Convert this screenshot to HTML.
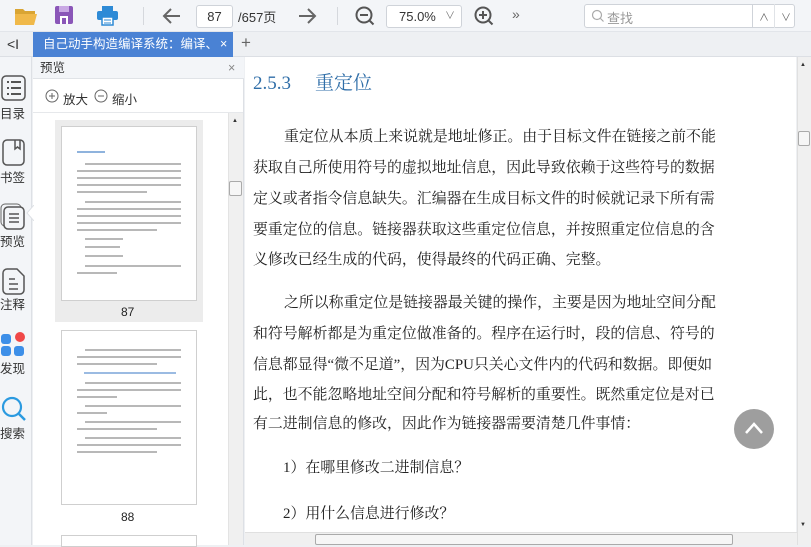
<!DOCTYPE html>
<html><head><meta charset="utf-8"><style>
*{margin:0;padding:0;box-sizing:border-box}
body{width:811px;height:545px;overflow:hidden;position:relative;background:#eef0f3;font-family:"Liberation Sans","Noto Sans CJK SC",sans-serif;}
.a{position:absolute}
.tb{left:0;top:0;width:811px;height:32px;background:#f3f5f8;border-bottom:1px solid #e2e5ea}
.tabbar{left:0;top:32px;width:811px;height:25px;background:#eef0f3;border-bottom:1px solid #dcdfe4}
.serif{font-family:"Liberation Serif","Noto Serif CJK SC",serif;color:#222}
.ln{position:absolute;left:253px;font-size:14.9px;white-space:nowrap;line-height:16px}
.bar{position:absolute;height:1.5px;background:#b8b8b8}
</style></head><body>
<div class="a tb"></div>
<svg class="a" style="left:14px;top:6px" width="24" height="20"><path d="M1 3h8l2 2h10v3H1z" fill="#d9a534"/><path d="M1 8h22l-3 11H1z" fill="#f0b94a"/></svg>
<svg class="a" style="left:55px;top:6px" width="19" height="19"><rect x="0" y="0" width="18" height="18" rx="2" fill="#8a56b8"/><rect x="4" y="0" width="10" height="6" fill="#c9a9e4"/><rect x="5" y="10" width="8" height="8" fill="#fff"/><rect x="7" y="12" width="4" height="6" fill="#8a56b8"/></svg>
<svg class="a" style="left:97px;top:6px" width="21" height="20"><rect x="5" y="0" width="11" height="5" fill="#2d8ad6"/><rect x="0" y="5" width="21" height="9" rx="2" fill="#2d8ad6"/><rect x="5" y="11" width="11" height="8" fill="#fff" stroke="#2d8ad6" stroke-width="1.5"/><path d="M7 14h7M7 17h7" stroke="#2d8ad6"/></svg>
<div class="a" style="left:143px;top:7px;width:1px;height:18px;background:#d5d8dd"></div>
<svg class="a" style="left:162px;top:7px" width="20" height="18"><path d="M18 9H3M9 2L2 9l7 7" stroke="#666" stroke-width="2" fill="none"/></svg>
<div class="a" style="left:196px;top:5px;width:37px;height:23px;background:#fff;border:1px solid #cfd3d9;border-radius:3px;font-size:13px;text-align:center;line-height:21px;color:#333">87</div>
<div class="a" style="left:238px;top:7px;font-size:13px;color:#333">/657页</div>
<svg class="a" style="left:297px;top:7px" width="20" height="18"><path d="M2 9h15M11 2l7 7-7 7" stroke="#666" stroke-width="2" fill="none"/></svg>
<div class="a" style="left:337px;top:7px;width:1px;height:18px;background:#d5d8dd"></div>
<svg class="a" style="left:354px;top:5px" width="22" height="22"><circle cx="10" cy="10" r="7.5" stroke="#555" stroke-width="2" fill="none"/><path d="M6 10h8M15.5 15.5l4 4" stroke="#555" stroke-width="2"/></svg>
<div class="a" style="left:386px;top:5px;width:76px;height:23px;background:#fff;border:1px solid #cfd3d9;border-radius:3px;font-size:13px;line-height:21px;color:#333;padding-left:12px">75.0%<span style="position:absolute;right:6px;top:0;font-size:10px;color:#777">∨</span></div>
<svg class="a" style="left:473px;top:5px" width="22" height="22"><circle cx="10" cy="10" r="7.5" stroke="#555" stroke-width="2" fill="none"/><path d="M6 10h8M10 6v8M15.5 15.5l4 4" stroke="#555" stroke-width="2"/></svg>
<div class="a" style="left:512px;top:6px;font-size:14px;color:#666">»</div>
<div class="a" style="left:584px;top:4px;width:211px;height:24px;background:#fff;border:1px solid #cfd3d9;border-radius:3px"></div>
<svg class="a" style="left:591px;top:9px" width="14" height="14"><circle cx="6" cy="6" r="4.5" stroke="#aaa" stroke-width="1.2" fill="none"/><path d="M9.5 9.5l3 3" stroke="#aaa" stroke-width="1.2"/></svg>
<div class="a" style="left:607px;top:8px;font-size:13px;color:#999">查找</div>
<div class="a" style="left:752px;top:4px;width:1px;height:24px;background:#cfd3d9"></div>
<div class="a" style="left:774px;top:4px;width:1px;height:24px;background:#e0e3e7"></div>
<div class="a" style="left:759px;top:9px;font-size:10px;color:#666">∧</div>
<div class="a" style="left:781px;top:9px;font-size:10px;color:#666">∨</div>

<div class="a tabbar"></div>
<div class="a" style="left:7px;top:36px;font-size:14px;color:#333">&lt;I</div>
<div class="a" style="left:33px;top:32px;width:200px;height:25px;background:#4a82d4;color:#fff;font-size:12.5px;line-height:25px;padding-left:10px;white-space:nowrap;overflow:hidden">自己动手构造编译系统：编译、<span style="position:absolute;left:184px;top:0;background:#4a82d4;padding-left:3px">×</span></div>
<div class="a" style="left:241px;top:33px;font-size:17px;color:#666">+</div>

<div class="a" style="left:0;top:57px;width:32px;height:488px;background:#f3f5f8;border-right:1px solid #dde0e5"></div>
<svg class="a" style="left:1px;top:75px" width="25" height="26"><rect x="1" y="1" width="23" height="24" rx="4" stroke="#555" stroke-width="1.5" fill="none"/><path d="M6 7h2M10 7h10M6 13h2M10 13h10M6 19h2M10 19h10" stroke="#555" stroke-width="2"/></svg>
<div class="a" style="left:0;top:103px;font-size:12.5px;color:#333">目录</div>
<svg class="a" style="left:2px;top:139px" width="23" height="27"><rect x="1" y="1" width="21" height="25" rx="4" stroke="#555" stroke-width="1.5" fill="none"/><path d="M13 1v9l2.5-2 2.5 2V1" stroke="#555" stroke-width="1.5" fill="none"/></svg>
<div class="a" style="left:0;top:167px;font-size:12.5px;color:#333">书签</div>
<svg class="a" style="left:0;top:203px" width="26" height="27"><rect x="1" y="1" width="20" height="22" rx="4" stroke="#666" fill="none"/><rect x="4" y="4" width="20" height="22" rx="4" stroke="#555" stroke-width="1.5" fill="#f3f5f8"/><path d="M9 11h10M9 15h10M9 19h10" stroke="#555" stroke-width="1.5"/></svg>
<div class="a" style="left:0;top:231px;font-size:12.5px;color:#333">预览</div>
<svg class="a" style="left:2px;top:268px" width="23" height="27"><path d="M1 5a4 4 0 014-4h10l7 7v14a4 4 0 01-4 4H5a4 4 0 01-4-4z" stroke="#555" stroke-width="1.5" fill="none"/><path d="M7 11h6M7 16h9M7 21h9" stroke="#555" stroke-width="1.5"/></svg>
<div class="a" style="left:0;top:294px;font-size:12.5px;color:#333">注释</div>
<div class="a" style="left:1px;top:334px;width:10px;height:10px;border-radius:3px;background:#3d8fe8"></div>
<div class="a" style="left:15px;top:332px;width:10px;height:10px;border-radius:50%;background:#f04848"></div>
<div class="a" style="left:1px;top:346px;width:10px;height:10px;border-radius:3px;background:#3d8fe8"></div>
<div class="a" style="left:14px;top:346px;width:10px;height:10px;border-radius:3px;background:#3d8fe8"></div>
<div class="a" style="left:0;top:358px;font-size:12.5px;color:#333">发现</div>
<svg class="a" style="left:1px;top:396px" width="26" height="26"><circle cx="11" cy="11" r="9" stroke="#2b9ae0" stroke-width="2.2" fill="none"/><path d="M18 18l6 6" stroke="#2b9ae0" stroke-width="2.5"/></svg>
<div class="a" style="left:0;top:423px;font-size:12.5px;color:#333">搜索</div>

<div class="a" style="left:33px;top:57px;width:211px;height:488px;background:#fff;border-right:1px solid #dde0e5"></div>
<div class="a" style="left:33px;top:57px;width:211px;height:22px;background:#f3f5f8;border-bottom:1px solid #e0e3e7;font-size:12.5px;line-height:22px;padding-left:7px;color:#333">预览<span style="position:absolute;left:195px;color:#888">×</span></div>
<svg class="a" style="left:45px;top:89px" width="14" height="14"><circle cx="7" cy="7" r="6" stroke="#666" fill="none"/><path d="M4 7h6M7 4v6" stroke="#666"/></svg>
<div class="a" style="left:63px;top:89px;font-size:12.5px;color:#333">放大</div>
<svg class="a" style="left:94px;top:89px" width="14" height="14"><circle cx="7" cy="7" r="6" stroke="#666" fill="none"/><path d="M4 7h6" stroke="#666"/></svg>
<div class="a" style="left:112px;top:89px;font-size:12.5px;color:#333">缩小</div>
<div class="a" style="left:33px;top:112px;width:210px;height:1px;background:#e6e8eb"></div>
<div class="a" style="left:228px;top:113px;width:15px;height:432px;background:#f0f0f0;border-left:1px solid #e3e3e3"></div>
<div class="a" style="left:232px;top:118px;font-size:6px;color:#333">▲</div>
<div class="a" style="left:229px;top:181px;width:13px;height:15px;background:#f6f6f6;border:1px solid #aaa;border-radius:2px"></div>
<div class="a" style="left:55px;top:120px;width:148px;height:202px;background:#ececec"></div>
<div class="a" style="left:61px;top:126px;width:136px;height:175px;background:#fff;border:1px solid #cfcfcf"></div>
<div class="a" style="left:77px;top:151px;width:28px;height:2px;background:#8fb3dd"></div>
<div class="bar" style="left:85px;top:163px;width:96px"></div>
<div class="bar" style="left:77px;top:170px;width:104px"></div>
<div class="bar" style="left:77px;top:177px;width:104px"></div>
<div class="bar" style="left:77px;top:184px;width:104px"></div>
<div class="bar" style="left:77px;top:191px;width:70px"></div>
<div class="bar" style="left:85px;top:201px;width:96px"></div>
<div class="bar" style="left:77px;top:208px;width:104px"></div>
<div class="bar" style="left:77px;top:215px;width:104px"></div>
<div class="bar" style="left:77px;top:222px;width:104px"></div>
<div class="bar" style="left:77px;top:229px;width:80px"></div>
<div class="bar" style="left:85px;top:238px;width:38px"></div>
<div class="bar" style="left:85px;top:246px;width:35px"></div>
<div class="bar" style="left:85px;top:255px;width:38px"></div>
<div class="bar" style="left:85px;top:265px;width:96px"></div>
<div class="bar" style="left:77px;top:272px;width:40px"></div>
<div class="a" style="left:121px;top:305px;font-size:12px;color:#222">87</div>
<div class="a" style="left:61px;top:330px;width:136px;height:175px;background:#fff;border:1px solid #cfcfcf"></div>
<div class="bar" style="left:85px;top:349px;width:96px"></div>
<div class="bar" style="left:77px;top:356px;width:104px"></div>
<div class="bar" style="left:77px;top:363px;width:80px"></div>
<div class="a" style="left:84px;top:372px;width:92px;height:1.5px;background:#9bbbe2"></div>
<div class="bar" style="left:85px;top:382px;width:96px"></div>
<div class="bar" style="left:77px;top:389px;width:104px"></div>
<div class="bar" style="left:77px;top:396px;width:40px"></div>
<div class="bar" style="left:85px;top:405px;width:96px"></div>
<div class="bar" style="left:77px;top:412px;width:30px"></div>
<div class="bar" style="left:85px;top:421px;width:96px"></div>
<div class="bar" style="left:77px;top:428px;width:80px"></div>
<div class="bar" style="left:85px;top:437px;width:96px"></div>
<div class="bar" style="left:77px;top:444px;width:104px"></div>
<div class="bar" style="left:77px;top:451px;width:80px"></div>
<div class="a" style="left:121px;top:510px;font-size:12px;color:#222">88</div>
<div class="a" style="left:61px;top:535px;width:136px;height:12px;background:#fff;border:1px solid #cfcfcf"></div>
<svg class="a" style="left:26px;top:205px" width="8" height="16"><path d="M8 0L1 8l7 8" fill="#fff" stroke="#dde0e5"/></svg>

<div class="a" style="left:245px;top:57px;width:551px;height:475px;background:#fff"></div>
<div class="a" style="left:797px;top:57px;width:14px;height:488px;background:#f0f0f0;border-left:1px solid #e0e0e0"></div>
<div class="a" style="left:800px;top:62px;font-size:6px;color:#333">▲</div>
<div class="a" style="left:798px;top:131px;width:12px;height:15px;background:#f6f6f6;border:1px solid #aaa;border-radius:2px"></div>
<div class="a" style="left:800px;top:522px;font-size:6px;color:#333">▼</div>
<div class="a" style="left:245px;top:532px;width:552px;height:13px;background:#f0f0f0;border-top:1px solid #e0e0e0"></div>
<div class="a" style="left:315px;top:534px;width:418px;height:11px;background:#f6f6f6;border:1px solid #aaa;border-radius:2px"></div>
<div class="a" style="left:253px;top:68px;font-size:19px;color:#2f6ea8;font-family:'Liberation Serif','Noto Serif CJK SC',serif;white-space:nowrap">2.5.3<span style="margin-left:24px">重定位</span></div>
<div class="serif">
<div class="ln" style="top:129px;left:284px">重定位从本质上来说就是地址修正。由于目标文件在链接之前不能</div>
<div class="ln" style="top:160px">获取自己所使用符号的虚拟地址信息，因此导致依赖于这些符号的数据</div>
<div class="ln" style="top:191px">定义或者指令信息缺失。汇编器在生成目标文件的时候就记录下所有需</div>
<div class="ln" style="top:222px">要重定位的信息。链接器获取这些重定位信息，并按照重定位信息的含</div>
<div class="ln" style="top:252px">义修改已经生成的代码，使得最终的代码正确、完整。</div>
<div class="ln" style="top:295px;left:284px">之所以称重定位是链接器最关键的操作，主要是因为地址空间分配</div>
<div class="ln" style="top:326px">和符号解析都是为重定位做准备的。程序在运行时，段的信息、符号的</div>
<div class="ln" style="top:357px">信息都显得“微不足道”，因为CPU只关心文件内的代码和数据。即便如</div>
<div class="ln" style="top:387px">此，也不能忽略地址空间分配和符号解析的重要性。既然重定位是对已</div>
<div class="ln" style="top:416px">有二进制信息的修改，因此作为链接器需要清楚几件事情：</div>
<div class="ln" style="top:460px;left:283px">1）在哪里修改二进制信息？</div>
<div class="ln" style="top:506px;left:283px">2）用什么信息进行修改？</div>
</div>
<div class="a" style="left:734px;top:409px;width:40px;height:40px;border-radius:50%;background:#9e9e9e"></div>
<svg class="a" style="left:744px;top:419px" width="20" height="18"><path d="M2 14L10 5l8 9" stroke="#fff" stroke-width="2.5" fill="none"/></svg>
</body></html>
